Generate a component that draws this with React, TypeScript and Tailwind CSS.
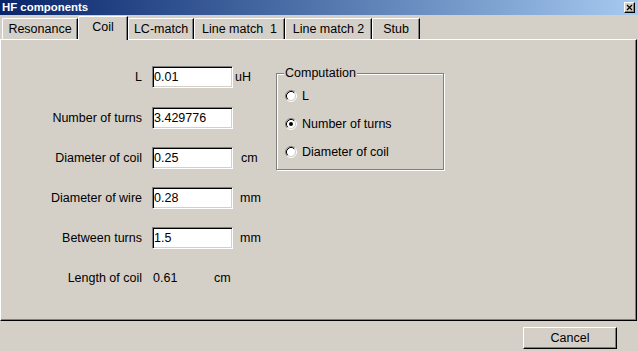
import React from "react";

const tabs = [
  { label: "Resonance", cls: "w-[76px] ml-[2px]", active: false },
  { label: "Coil", cls: "w-[50px]", active: true },
  { label: "LC-match", cls: "w-[66px]", active: false },
  { label: "Line match  1", cls: "w-[91px]", active: false },
  { label: "Line match 2", cls: "w-[87px]", active: false },
  { label: "Stub", cls: "w-[48px]", active: false },
];

function Radio({ checked }: { checked?: boolean }) {
  return (
    <svg width="12" height="12" viewBox="0 0 12 12" className="shrink-0">
      <circle cx="6" cy="6" r="4.5" fill="#fff" />
      <path d="M2.11 9.89 A5.5 5.5 0 0 1 9.89 2.11" fill="none" stroke="#808080" strokeWidth="1" />
      <path d="M9.89 2.11 A5.5 5.5 0 0 1 2.11 9.89" fill="none" stroke="#ffffff" strokeWidth="1" />
      <path d="M2.82 9.18 A4.5 4.5 0 0 1 9.18 2.82" fill="none" stroke="#000000" strokeWidth="1" />
      <path d="M9.18 2.82 A4.5 4.5 0 0 1 2.82 9.18" fill="none" stroke="#d4d0c8" strokeWidth="1" />
      {checked && <circle cx="6" cy="6" r="2" fill="#000" />}
    </svg>
  );
}

function Field({
  label,
  value,
  unit,
  unitCls,
  rowCls,
}: {
  label: string;
  value: string;
  unit: string;
  unitCls: string;
  rowCls: string;
}) {
  return (
    <div className={`flex items-center h-[22px] ${rowCls}`}>
      <div className="w-[141px] text-right shrink-0">{label}</div>
      <div className="ml-[10px] w-[81px] h-[22px] bg-white border border-t-[#808080] border-l-[#808080] border-b-white border-r-white shadow-[inset_1px_1px_0_#000,inset_-1px_-1px_0_#d4d0c8] flex items-center pl-[1px] shrink-0">
        {value}
      </div>
      <div className={unitCls}>{unit}</div>
    </div>
  );
}

export default function App() {
  return (
    <div className="w-[638px] h-[351px] bg-[#d4d0c8] flex flex-col overflow-hidden font-['Liberation_Sans',Arial,sans-serif] text-[12.5px] text-black leading-none">
      {/* Title bar */}
      <div className="h-[15px] shrink-0 bg-gradient-to-r from-[#0a246a] to-[#a6caf0] flex items-center justify-between pl-[2px] pr-[3px]">
        <span className="text-white font-bold text-[11.4px] leading-none">HF components</span>
        <div className="w-[11px] h-[11px] bg-[#d4d0c8] border border-t-white border-l-white border-b-black border-r-black shadow-[inset_-1px_-1px_0_#808080] flex items-center justify-center">
          <svg width="7" height="7" viewBox="0 0 7 7">
            <path d="M1 1 L6 6 M6 1 L1 6" stroke="#000" strokeWidth="1.2" />
          </svg>
        </div>
      </div>

      {/* Tabs */}
      <div className="h-[24px] shrink-0 flex items-end">
        {tabs.map((t) =>
          t.active ? (
            <div
              key={t.label}
              className={`${t.cls} relative z-10 -mb-[1px] h-[24px] bg-[#d4d0c8] border-t border-l border-white border-r border-r-black shadow-[inset_-1px_0_0_#808080] rounded-tl-[2px] flex items-center justify-center pb-[3px] whitespace-pre`}
            >
              {t.label}
            </div>
          ) : (
            <div
              key={t.label}
              className={`${t.cls} h-[21px] bg-[#d4d0c8] border-t border-l border-white border-r border-r-black shadow-[inset_-1px_0_0_#808080] rounded-tl-[2px] flex items-center justify-center whitespace-pre`}
            >
              {t.label}
            </div>
          )
        )}
      </div>

      {/* Panel */}
      <div className="w-[637px] h-[282px] shrink-0 border-t border-l border-white border-r border-r-black border-b border-b-black shadow-[inset_-1px_-1px_0_#808080] flex">
        <div className="w-[275px] shrink-0 pt-[26px] flex flex-col">
          <Field label="L" value="0.01" unit="uH" unitCls="ml-[2px]" rowCls="" />
          <Field label="Number of turns" value="3.429776" unit="" unitCls="" rowCls="mt-[19px]" />
          <Field label="Diameter of coil" value="0.25" unit="cm" unitCls="ml-[8px]" rowCls="mt-[18px]" />
          <Field label="Diameter of wire" value="0.28" unit="mm" unitCls="ml-[7px]" rowCls="mt-[18px]" />
          <Field label="Between turns" value="1.5" unit="mm" unitCls="ml-[7px]" rowCls="mt-[18px]" />
          <div className="flex items-center h-[22px] mt-[18px]">
            <div className="w-[141px] text-right shrink-0">Length of coil</div>
            <div className="ml-[11px] w-[61px] shrink-0">0.61</div>
            <div>cm</div>
          </div>
        </div>

        <div className="mt-[33px] w-[168px] h-[97px] relative border border-[#808080] shadow-[1px_1px_0_#fff,inset_1px_1px_0_#fff] flex flex-col pl-[8px] pt-[15px] gap-[14px]">
          <span className="absolute left-[7px] top-[-8px] h-[14px] leading-[14px] px-[1px] bg-[#d4d0c8]">
            Computation
          </span>
          <div className="flex items-center h-[14px] gap-[5px]">
            <Radio />
            <span>L</span>
          </div>
          <div className="flex items-center h-[14px] gap-[5px]">
            <Radio checked />
            <span>Number of turns</span>
          </div>
          <div className="flex items-center h-[14px] gap-[5px]">
            <Radio />
            <span>Diameter of coil</span>
          </div>
        </div>
      </div>

      {/* Bottom */}
      <div className="flex justify-end pr-[21px] pt-[6px]">
        <div className="w-[94px] h-[22px] border border-t-white border-l-white border-b-black border-r-black shadow-[inset_-1px_-1px_0_#808080] flex items-center justify-center">
          Cancel
        </div>
      </div>
    </div>
  );
}
